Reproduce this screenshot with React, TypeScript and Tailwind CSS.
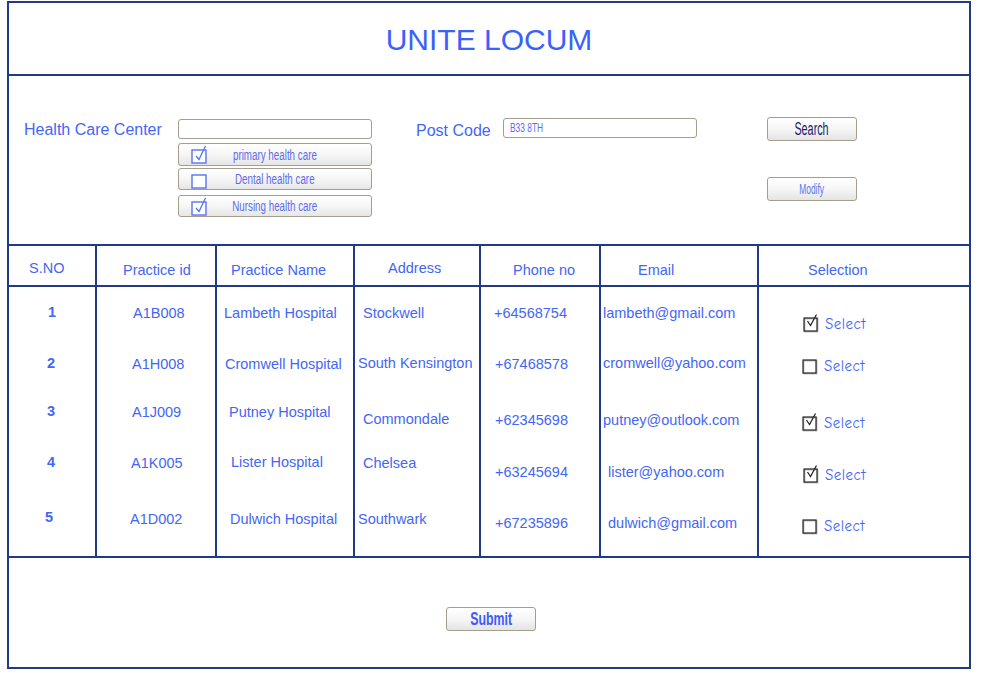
import type { ReactNode } from "react";

const LINE = "border-[#203a86]";
const BLUE = "text-[#4466f5]";

type Cell = { text: string; cls: string };

interface Row {
  no: Cell;
  id: Cell;
  name: Cell;
  address: Cell;
  phone: Cell;
  email: Cell;
  selected: boolean;
  selCls: string;
}

const ROWS: Row[] = [
  {
    no: { text: "1", cls: "pt-[16px] pl-[39px]" },
    id: { text: "A1B008", cls: "pt-[17px] pl-[36px]" },
    name: { text: "Lambeth Hospital", cls: "pt-[17px] pl-[7px]" },
    address: { text: "Stockwell", cls: "pt-[17px] pl-[8px]" },
    phone: { text: "+64568754", cls: "pt-[17px] pl-[13px]" },
    email: { text: "lambeth@gmail.com", cls: "pt-[17px] pl-[2px]" },
    selected: true,
    selCls: "pt-[26px] pl-[44px]",
  },
  {
    no: { text: "2", cls: "pt-[13px] pl-[38px]" },
    id: { text: "A1H008", cls: "pt-[14px] pl-[35px]" },
    name: { text: "Cromwell Hospital", cls: "pt-[14px] pl-[8px]" },
    address: { text: "South Kensington", cls: "pt-[13px] pl-[3px]" },
    phone: { text: "+67468578", cls: "pt-[14px] pl-[14px]" },
    email: { text: "cromwell@yahoo.com", cls: "pt-[13px] pl-[2px]" },
    selected: false,
    selCls: "pt-[14px] pl-[43px]",
  },
  {
    no: { text: "3", cls: "pt-[7px] pl-[38px]" },
    id: { text: "A1J009", cls: "pt-[8px] pl-[35px]" },
    name: { text: "Putney Hospital", cls: "pt-[8px] pl-[12px]" },
    address: { text: "Commondale", cls: "pt-[15px] pl-[8px]" },
    phone: { text: "+62345698", cls: "pt-[16px] pl-[14px]" },
    email: { text: "putney@outlook.com", cls: "pt-[16px] pl-[2px]" },
    selected: true,
    selCls: "pt-[17px] pl-[43px]",
  },
  {
    no: { text: "4", cls: "pt-[4px] pl-[38px]" },
    id: { text: "A1K005", cls: "pt-[5px] pl-[34px]" },
    name: { text: "Lister Hospital", cls: "pt-[4px] pl-[14px]" },
    address: { text: "Chelsea", cls: "pt-[5px] pl-[8px]" },
    phone: { text: "+63245694", cls: "pt-[14px] pl-[14px]" },
    email: { text: "lister@yahoo.com", cls: "pt-[14px] pl-[7px]" },
    selected: true,
    selCls: "pt-[15px] pl-[44px]",
  },
  {
    no: { text: "5", cls: "pt-[5px] pl-[36px]" },
    id: { text: "A1D002", cls: "pt-[7px] pl-[33px]" },
    name: { text: "Dulwich Hospital", cls: "pt-[7px] pl-[13px]" },
    address: { text: "Southwark", cls: "pt-[7px] pl-[3px]" },
    phone: { text: "+67235896", cls: "pt-[11px] pl-[14px]" },
    email: { text: "dulwich@gmail.com", cls: "pt-[11px] pl-[7px]" },
    selected: false,
    selCls: "pt-[12px] pl-[43px]",
  },
];

const HEADERS: Cell[] = [
  { text: "S.NO", cls: "pt-[13px] pl-[20px]" },
  { text: "Practice id", cls: "pt-[15px] pl-[26px]" },
  { text: "Practice Name", cls: "pt-[15px] pl-[14px]" },
  { text: "Address", cls: "pt-[13px] pl-[33px]" },
  { text: "Phone no", cls: "pt-[15px] pl-[32px]" },
  { text: "Email", cls: "pt-[15px] pl-[37px]" },
  { text: "Selection", cls: "pt-[15px] pl-[49px]" },
];

const COLS = "grid grid-cols-[86px_120px_138px_126px_120px_158px_212px]";

// condensed "Agency"-style button labels: squeeze a regular face horizontally
function Narrow({ children, className = "" }: { children: ReactNode; className?: string }) {
  return <span className={`inline-block whitespace-nowrap ${className}`}>{children}</span>;
}

function BlueCheck({ checked }: { checked: boolean }) {
  return (
    <svg width="17" height="19" viewBox="0 0 17 19" className="flex-none">
      <rect x="1" y="5" width="14" height="13" fill="white" stroke="#5a74ea" strokeWidth="1.4" />
      {checked && <path d="M5 11 L8 14.5 L14.5 1" fill="none" stroke="#5a74ea" strokeWidth="1.3" />}
    </svg>
  );
}

function TableCheck({ checked }: { checked: boolean }) {
  return (
    <svg width="17" height="19" viewBox="0 0 17 19" className="flex-none">
      <rect x="1.5" y="4.5" width="13" height="13" fill="white" stroke="#9a9a9a" strokeWidth="1.6" />
      <rect x="1" y="4" width="13" height="13" fill="none" stroke="#2a2a2a" strokeWidth="1.1" />
      {checked && <path d="M4.5 7 L7.5 11.5 L13.5 0.5" fill="none" stroke="#2a2a2a" strokeWidth="1.3" />}
    </svg>
  );
}

function OptionButton({ label, checked, height }: { label: string; checked: boolean; height: string }) {
  return (
    <div
      className={`${height} flex w-[194px] items-center rounded-[3px] border border-[#a59d8d] bg-gradient-to-b from-white via-[#f6f6f6] to-[#e6e6e6] pl-[12px]`}
    >
      <BlueCheck checked={checked} />
      <div className="flex-1 pr-[29px] text-center text-[14px] leading-[16px] text-[#5d6cee]">
        <Narrow className="scale-x-70">{label}</Narrow>
      </div>
    </div>
  );
}

function GreyButton({ children, className = "" }: { children: ReactNode; className?: string }) {
  return (
    <div
      className={`flex h-[24px] w-[90px] items-center justify-center rounded-[3px] border border-[#a59d8d] bg-gradient-to-b from-white via-[#f6f6f6] to-[#e4e4e4] ${className}`}
    >
      {children}
    </div>
  );
}

function TextCell({ cell, first = false }: { cell: Cell; first?: boolean }) {
  return (
    <div className={`${first ? "" : `border-l-2 ${LINE}`} ${cell.cls}`}>
      <div className="mt-[1px] whitespace-nowrap text-[14.5px] leading-[17px]">{cell.text}</div>
    </div>
  );
}

export default function App() {
  return (
    <div
      className={`h-[684px] w-[985px] bg-white pl-[7px] pt-[1px] ${BLUE}`}
      style={{ fontFamily: '"Liberation Sans", Arial, sans-serif' }}
    >
      <div className={`flex h-[668px] w-[964px] flex-col border-2 ${LINE}`}>
        {/* title */}
        <div className={`flex h-[73px] flex-none items-center justify-center border-b-2 pt-[3px] ${LINE}`}>
          <h1 className="text-[30px] leading-[34px] text-[#3a62fb]">UNITE LOCUM</h1>
        </div>

        {/* search form */}
        <div className="flex h-[168px] flex-none items-start pl-[15px] pt-[42px]">
          <div className="mt-[2px] w-[154px] text-[16px] leading-[20px]">Health Care Center</div>
          <div className="mt-[1px] flex w-[194px] flex-col">
            <div className="h-[20px] rounded-[3px] border border-[#a59d8d] bg-white" />
            <div className="mt-[4px]">
              <OptionButton label="primary health care" checked height="h-[23px]" />
            </div>
            <div className="mt-[2px]">
              <OptionButton label="Dental health care" checked={false} height="h-[22px]" />
            </div>
            <div className="mt-[5px]">
              <OptionButton label="Nursing health care" checked height="h-[22px]" />
            </div>
          </div>

          <div className="ml-[44px] mt-[3px] w-[87px] text-[16px] leading-[20px]">Post Code</div>
          <div className="flex h-[20px] w-[194px] items-center rounded-[3px] border border-[#a59d8d] bg-white pl-[6px] text-[12px] leading-[14px] text-[#5d6cee]">
            <Narrow className="origin-left scale-x-70">B33 8TH</Narrow>
          </div>

          <div className="ml-[70px] -mt-[1px] flex flex-col">
            <GreyButton>
              <Narrow className="scale-x-60 text-[18px] leading-[20px] text-[#1d1d66]">Search</Narrow>
            </GreyButton>
            <GreyButton className="mt-[36px]">
              <Narrow className="scale-x-60 text-[14px] leading-[16px] text-[#5577f2]">Modify</Narrow>
            </GreyButton>
          </div>
        </div>

        {/* table */}
        <div className={`flex-none border-y-2 ${LINE}`}>
          <div className={`${COLS} h-[41px] border-b-2 ${LINE}`}>
            {HEADERS.map((h, i) => (
              <TextCell key={h.text} cell={h} first={i === 0} />
            ))}
          </div>
          <div className={COLS}>
            {ROWS.map((r, i) => {
              const rowH = i === ROWS.length - 1 ? "h-[53px]" : "h-[54px]";
              return (
                <div key={r.id.text} className={`col-span-7 grid grid-cols-subgrid ${rowH}`}>
                  <div className={r.no.cls}>
                    <div className="mt-[1px] text-[14.5px] font-bold leading-[17px]">{r.no.text}</div>
                  </div>
                  <TextCell cell={r.id} />
                  <TextCell cell={r.name} />
                  <TextCell cell={r.address} />
                  <TextCell cell={r.phone} />
                  <TextCell cell={r.email} />
                  <div className={`border-l-2 ${LINE} ${r.selCls}`}>
                    <div className="mt-[1px] flex items-end gap-[5px]">
                      <TableCheck checked={r.selected} />
                      <span
                        className="text-[15px] leading-[17px] tracking-[0.5px]"
                        style={{ fontFamily: '"Comic Sans MS", "Comic Neue", "Liberation Sans", sans-serif' }}
                      >
                        Select
                      </span>
                    </div>
                  </div>
                </div>
              );
            })}
          </div>
        </div>

        {/* footer */}
        <div className="flex flex-1 justify-center pt-[49px]">
          <GreyButton className="ml-[4px]">
            <Narrow className="scale-x-65 text-[19px] font-bold leading-[22px] text-[#3b5bfd]">Submit</Narrow>
          </GreyButton>
        </div>
      </div>
    </div>
  );
}
